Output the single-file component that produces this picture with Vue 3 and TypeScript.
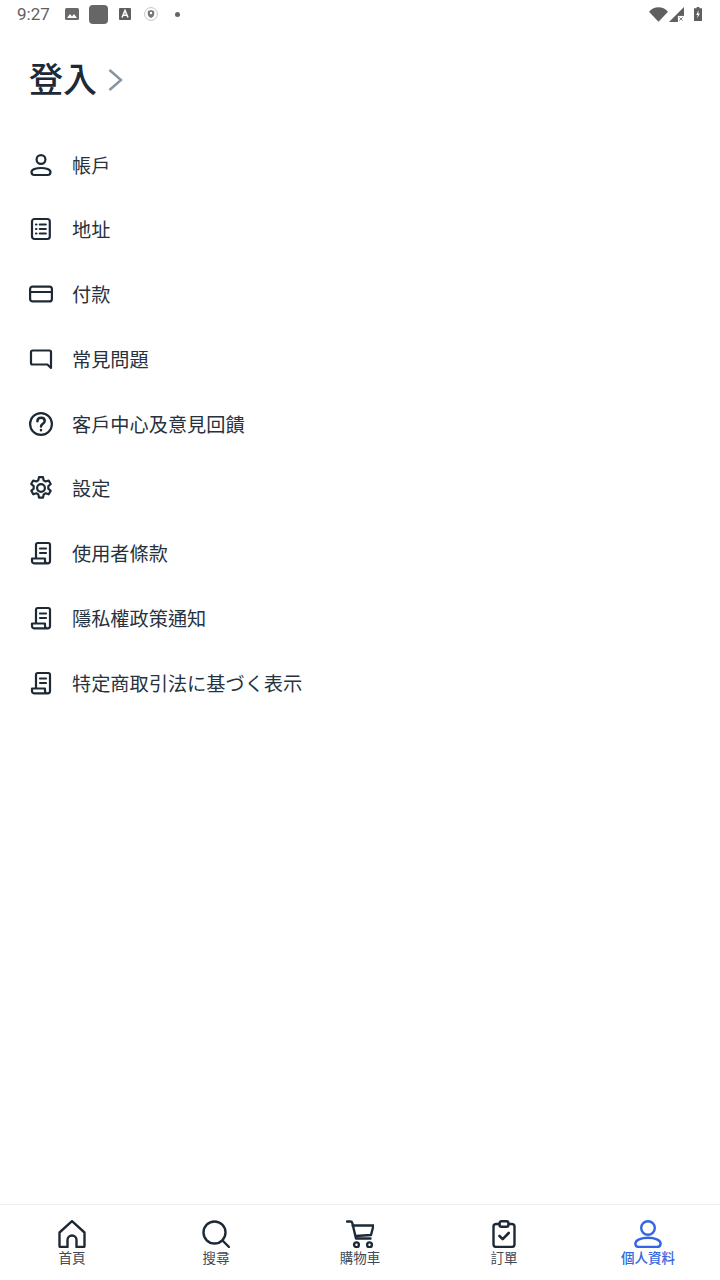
<script setup lang="ts">
interface MenuItem {
  label: string
  icon: string
}

const menu: MenuItem[] = [
  { label: '帳戶', icon: 'user' },
  { label: '地址', icon: 'list' },
  { label: '付款', icon: 'card' },
  { label: '常見問題', icon: 'chat' },
  { label: '客戶中心及意見回饋', icon: 'help' },
  { label: '設定', icon: 'gear' },
  { label: '使用者條款', icon: 'doc' },
  { label: '隱私權政策通知', icon: 'doc' },
  { label: '特定商取引法に基づく表示', icon: 'doc' },
]

const tabs = [
  { label: '首頁', icon: 'home' },
  { label: '搜尋', icon: 'search' },
  { label: '購物車', icon: 'cart' },
  { label: '訂單', icon: 'orders' },
  { label: '個人資料', icon: 'profile', active: true },
]
</script>

<template>
  <div class="page">
    <div class="status">
      <span class="time">9:27</span>
      <svg class="s-img" viewBox="0 0 14 12"><rect width="14" height="12" rx="1.5" fill="#6a6a6a" /><path d="M2 10l3-4 2 2.5L9 6l3 4z" fill="#fff" /></svg>
      <span class="s-square"></span>
      <svg class="s-a" viewBox="0 0 12 12"><rect width="12" height="12" rx="1" fill="#5f5f5f" /><path d="M3 9.5L6 2.5l3 7M4.2 7.2h3.6" fill="none" stroke="#fff" stroke-width="1.5" /></svg>
      <svg class="s-shield" viewBox="0 0 14 14"><circle cx="7" cy="7" r="6.4" fill="none" stroke="#c4c4c4" /><path d="M3.8 4l3.2-1 3.2 1v3c0 2-1.4 3.2-3.2 4-1.8-.8-3.2-2-3.200-4z" fill="#777" /><circle cx="7" cy="6" r="1.2" fill="#fff" /></svg>
      <span class="s-dot"></span>
      <span class="grow"></span>
      <svg class="s-wifi" viewBox="0 0 20 15"><path d="M0 4.5C5.500-1.500 14.500-1.500 20 4.500L10 15z" fill="#5f5f5f" /></svg>
      <svg class="s-signal" viewBox="0 0 16 16"><path d="M16 0v16H0z" fill="#5f5f5f" /><rect x="9.500" y="9.500" width="6.500" height="6.500" fill="#fff" /><path d="M11 11l3.500 3.500M14.500 11L11 14.500" stroke="#777" stroke-width="1" /></svg>
      <svg class="s-batt" viewBox="0 0 9 16"><path d="M3 0h3v1.500h3V16H0V1.500h3z" fill="#5f5f5f" /><path d="M5.200 3.500L2.500 9h1.800l-.7 4 3-5.700H4.800z" fill="#fff" /></svg>
    </div>

    <div class="login">
      <span class="login-text">登入</span>
      <svg class="chev" viewBox="0 0 16 26"><path d="M2.500 3l11.500 10-11.500 10" fill="none" stroke="#8593a3" stroke-width="2.400" /></svg>
    </div>

    <ul class="menu">
      <li v-for="item in menu" :key="item.label" class="row">
        <svg class="icon" viewBox="0 0 24 24" fill="none" stroke="#1d2a36" stroke-width="2.200" stroke-linecap="round" stroke-linejoin="round">
          <template v-if="item.icon === 'user'">
            <circle cx="12" cy="6.500" r="4.400" />
            <path d="M12 15c-5 0-9.500 1.600-9.500 4 0 1.800 1 3 2.800 3h13.400c1.800 0 2.800-1.200 2.800-3 0-2.400-4.500-4-9.500-4z" />
          </template>
          <template v-else-if="item.icon === 'list'">
            <rect x="3" y="2" width="17.800" height="20" rx="2.500" />
            <path d="M10.800 7.500h6M10.800 12h6M10.800 16.500h6M7 7.500h.4M7 12h.4M7 16.500h.4" />
          </template>
          <template v-else-if="item.icon === 'card'">
            <rect x="1.100" y="4.600" width="21.800" height="14.800" rx="2.500" />
            <path d="M1.100 10h21.800" />
          </template>
          <template v-else-if="item.icon === 'chat'">
            <path d="M3.500 3.500h17c.9 0 1.500.6 1.500 1.500v16l-3.600-3.500H3.500c-.9 0-1.500-.6-1.500-1.500V5c0-.9.600-1.500 1.500-1.500z" />
          </template>
          <template v-else-if="item.icon === 'help'">
            <circle cx="12" cy="12" r="10.900" />
            <path d="M8.400 9.300c0-2.100 1.600-3.500 3.700-3.500s3.600 1.300 3.600 3.100c0 2.900-3.700 2.800-3.700 5.700M12 18v.2" stroke-width="2.500" />
          </template>
          <template v-else-if="item.icon === 'gear'">
            <circle cx="12" cy="12" r="3.900" />
            <path d="M10 1.200h4l.7 3.200 1.900 1.100 3.100-1 2 3.500-2.400 2.200v2.400l2.400 2.200-2 3.500-3.100-1-1.900 1.100-.7 3.200h-4l-.7-3.200-1.900-1.100-3.100 1-2-3.500 2.400-2.200v-2.400L2.200 8l2-3.500 3.100 1 1.900-1.100z" />
          </template>
          <template v-else>
            <path d="M7 17.500V3.800C7 2.800 7.800 2 8.800 2h10.400c1 0 1.800.8 1.800 1.800V20c0 1.200-1 2.300-2.300 2.300H5c-1.300 0-2-1-2-2.300v-2.500h13V20c0 1.200 1 2.300 2.700 2.300" />
            <path d="M11 7.500h6M11 12h6" />
          </template>
        </svg>
        <span class="label">{{ item.label }}</span>
      </li>
    </ul>

    <div class="grow"></div>

    <nav class="tabbar">
      <div v-for="tab in tabs" :key="tab.label" class="tab" :class="{ active: tab.active }">
        <svg class="tab-icon" viewBox="0 0 28 28" fill="none" :stroke="tab.active ? '#3366e0' : '#1d2a36'" stroke-width="2.400" stroke-linecap="round" stroke-linejoin="round">
          <template v-if="tab.icon === 'home'">
            <path d="M1.500 12.500L14 1.200l12.500 11.300V26a1 1 0 0 1-1 1h-7v-7a4.500 4.500 0 0 0-9 0v7h-7a1 1 0 0 1-1-1z" />
          </template>
          <template v-else-if="tab.icon === 'search'">
            <circle cx="12.500" cy="12.500" r="11" />
            <path d="M20.500 20.500L27 27" />
          </template>
          <template v-else-if="tab.icon === 'cart'">
            <path d="M1 1.500h3.500c1 0 1.500.5 1.800 1.500L10 18.500h14.500M6.500 5.500H27.500l-2.500 9.500-15 1" />
            <circle cx="10.500" cy="24.800" r="2.400" />
            <circle cx="23.500" cy="24.800" r="2.400" />
          </template>
          <template v-else-if="tab.icon === 'orders'">
            <path d="M9.500 4H6.500C4.500 4 3.500 5 3.500 6.500v18c0 1.500 1 2.500 3 2.500h15c2 0 3-1 3-2.500v-18c0-1.500-1-2.500-3-2.500h-3" />
            <rect x="9.500" y="1.200" width="9" height="5.500" rx="2" />
            <path d="M9.500 16l3.200 3.200 6-6.200" stroke-width="2.600" />
          </template>
          <template v-else>
            <circle cx="14" cy="8" r="6.800" />
            <path d="M14 17.800c-6.800 0-12.600 2.300-12.600 5.700 0 2.200 1.300 3.500 3.800 3.500h17.600c2.500 0 3.800-1.300 3.800-3.500 0-3.400-5.800-5.700-12.600-5.700z" />
          </template>
        </svg>
        <span class="tab-label">{{ tab.label }}</span>
      </div>
    </nav>
  </div>
</template>

<style scoped>
.page {
  height: 1280px;
  display: flex;
  flex-direction: column;
  background: #fff;
  font-family: "Inter", "Noto Sans CJK TC", sans-serif;
  color: #1d2a36;
  overflow: hidden;
}
.grow { flex: 1; }

.status {
  height: 28px;
  display: flex;
  align-items: center;
  padding: 0 18px 0 17px;
  box-sizing: border-box;
  flex: none;
}
.time {
  font-family: "Roboto", sans-serif;
  font-size: 17px;
  color: #5f5f5f;
  width: 48px;
}
.s-img { width: 14px; height: 12px; }
.s-square { width: 19px; height: 19px; border-radius: 4px; background: #666; margin-left: 10px; }
.s-a { width: 12px; height: 12px; margin-left: 11px; }
.s-shield { width: 14px; height: 14px; margin-left: 13px; }
.s-dot { width: 5px; height: 5px; border-radius: 50%; background: #666; margin-left: 17px; }
.s-wifi { width: 19px; height: 15px; }
.s-signal { width: 15px; height: 15px; margin-left: 1px; }
.s-batt { width: 8px; height: 16px; margin-left: 10px; }

.login {
  display: flex;
  align-items: center;
  padding: 30px 0 0 29px;
  height: 44px;
  flex: none;
}
.login-text {
  font-size: 34px;
  font-weight: 500;
  line-height: 44px;
}
.chev { width: 16px; height: 26px; margin-left: 10px; }

.menu {
  list-style: none;
  margin: 30.2px 0 0;
  padding: 0;
}
.row {
  height: 64.75px;
  display: flex;
  align-items: center;
  padding-left: 29px;
}
.icon { width: 24px; height: 24px; flex: none; }
.label {
  font-size: 19.2px;
  margin-left: 19px;
  color: #26323d;
}

.tabbar {
  height: 76px;
  flex: none;
  display: flex;
  border-top: 1px solid #eceef0;
  box-sizing: border-box;
}
.tab {
  flex: 1;
  display: flex;
  flex-direction: column;
  align-items: center;
  padding-top: 15px;
}
.tab-icon { width: 28px; height: 28px; }
.tab-label {
  font-size: 13.5px;
  line-height: 18px;
  margin-top: 1px;
  color: #3f4a54;
}
.active .tab-label { color: #3366e0; font-weight: 500; }
</style>

<style>
html, body { margin: 0; background: #fff; }
</style>
